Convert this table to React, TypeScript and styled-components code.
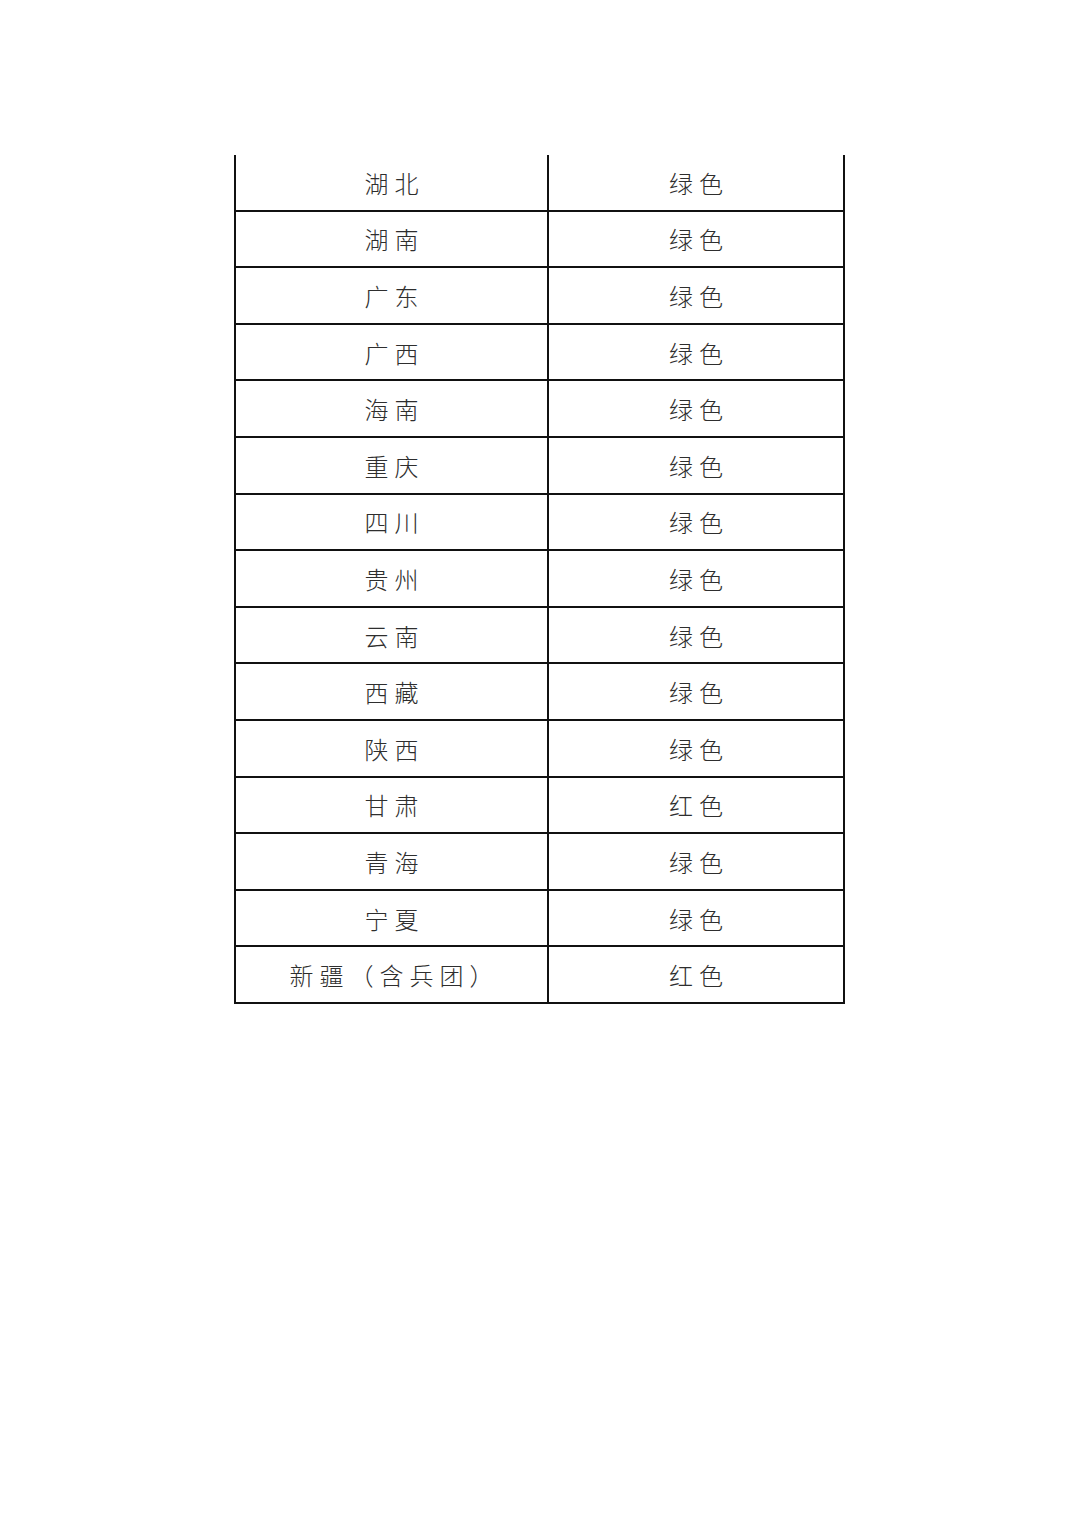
import React from 'react';
import styled, { createGlobalStyle } from 'styled-components';

const GlobalStyle = createGlobalStyle`
  html, body {
    margin: 0;
    padding: 0;
    background: #fff;
  }
  body {
    font-family: "Noto Sans CJK SC", "Noto Sans", sans-serif;
  }
`;

const Page = styled.div`
  width: 1080px;
  height: 1527px;
  padding: 155px 0 0 234px;
  box-sizing: border-box;
  background: #fff;
`;

const Table = styled.div`
  display: grid;
  grid-template-columns: 315px 296px;
  grid-auto-rows: 56.6px;
  width: 611px;
`;

const Cell = styled.div<{ $first?: boolean }>`
  box-sizing: border-box;
  display: flex;
  align-items: center;
  justify-content: center;
  padding: 1px 0 0 6px;
  border-bottom: 2px solid #111;
  border-right: 2px solid #111;
  border-left: ${(p) => (p.$first ? '2px solid #111' : 'none')};
  font-size: 24px;
  font-weight: 300;
  letter-spacing: 6px;
  color: #2e2e2e;
  line-height: 1;
  white-space: nowrap;
`;

const rows: [string, string][] = [
  ['湖北', '绿色'],
  ['湖南', '绿色'],
  ['广东', '绿色'],
  ['广西', '绿色'],
  ['海南', '绿色'],
  ['重庆', '绿色'],
  ['四川', '绿色'],
  ['贵州', '绿色'],
  ['云南', '绿色'],
  ['西藏', '绿色'],
  ['陕西', '绿色'],
  ['甘肃', '红色'],
  ['青海', '绿色'],
  ['宁夏', '绿色'],
  ['新疆（含兵团）', '红色'],
];

const App: React.FC = () => (
  <>
    <GlobalStyle />
    <Page>
      <Table>
        {rows.map(([region, level]) => (
          <React.Fragment key={region}>
            <Cell $first>{region}</Cell>
            <Cell>{level}</Cell>
          </React.Fragment>
        ))}
      </Table>
    </Page>
  </>
);

export default App;
